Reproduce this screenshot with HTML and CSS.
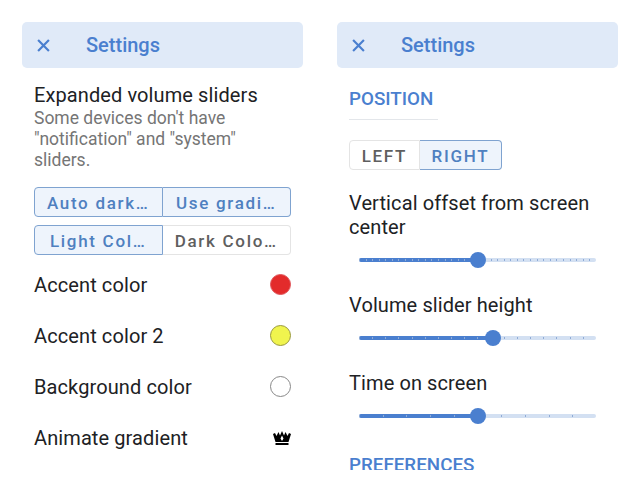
FILE: index.html
```html
<!DOCTYPE html>
<html lang="en">
<head>
    <meta charset="UTF-8">
    <title>Settings</title>
    <link rel="stylesheet" href="styles.css">
</head>
<body>
    <main class="screens">
        <section class="panel">
            <header class="bar">
                <svg class="close" viewBox="0 0 12 12"><path d="M1 1 11 11M11 1 1 11"/></svg>
                <h1>Settings</h1>
            </header>
            <div class="content">
                <h2 class="title">Expanded volume sliders</h2>
                <p class="sub">Some devices don't have "notification" and "system" sliders.</p>
                <div class="toggles wide first">
                    <button class="on">Auto dark…</button>
                    <button class="on">Use gradi…</button>
                </div>
                <div class="toggles wide">
                    <button class="on">Light Col…</button>
                    <button>Dark Colo…</button>
                </div>
                <div class="row first-row"><span>Accent color</span><i class="dot red"></i></div>
                <div class="row"><span>Accent color 2</span><i class="dot yellow"></i></div>
                <div class="row"><span>Background color</span><i class="dot white"></i></div>
                <div class="row">
                    <span>Animate gradient</span>
                    <svg class="crown" viewBox="0 0 18 14">
                        <path fill-rule="evenodd" d="M0 3 2 2 3.5 5 5.5 1 7 4.5 9 0 11 4.5 12.500 1 14.500 5 16 2 18 3 15.500 11H2.500ZM9 4.500 7.500 7.500 9 10 10.500 7.500Z"/>
                        <path d="M2.500 12H15.500V14H2.500Z"/>
                    </svg>
                </div>
            </div>
        </section>

        <section class="panel">
            <header class="bar">
                <svg class="close" viewBox="0 0 12 12"><path d="M1 1 11 11M11 1 1 11"/></svg>
                <h1>Settings</h1>
            </header>
            <div class="content">
                <h3 class="group">POSITION</h3>
                <div class="toggles small">
                    <button>LEFT</button>
                    <button class="on">RIGHT</button>
                </div>
                <h2 class="title">Vertical offset from screen center</h2>
                <div class="slider">
                    <div class="track ticks-fine"><div class="fill" style="width: 50%"></div></div>
                    <div class="thumb" style="left: 50%"></div>
                </div>
                <h2 class="title">Volume slider height</h2>
                <div class="slider">
                    <div class="track ticks-mid"><div class="fill" style="width: 56.5%"></div></div>
                    <div class="thumb" style="left: 56.5%"></div>
                </div>
                <h2 class="title">Time on screen</h2>
                <div class="slider">
                    <div class="track ticks-wide"><div class="fill" style="width: 50%"></div></div>
                    <div class="thumb" style="left: 50%"></div>
                </div>
                <h3 class="group next">PREFERENCES</h3>
            </div>
        </section>
    </main>
</body>
</html>
```

FILE: styles.css
```css
* {
    box-sizing: border-box;
}

body {
    margin: 0;
    background: #fff;
    color: #202124;
    font-family: Roboto, "Liberation Sans", sans-serif;
}

.screens {
    display: flex;
    gap: 34px;
    height: 470px;
    padding: 22px 22px 0;
    overflow: hidden;
}

.panel {
    width: 281px;
    flex: none;
}

.bar {
    display: flex;
    align-items: center;
    height: 46px;
    padding-left: 15px;
    background: #e0eaf8;
    border-radius: 5px;
}

.bar h1 {
    margin: 0 0 0 36px;
    color: #4a7fcf;
    font-size: 20px;
    font-weight: 500;
}

.close {
    width: 13px;
    height: 13px;
    fill: none;
    stroke: #4a7fcf;
    stroke-width: 2;
}

.content {
    padding: 15px 12px 0;
}

.title {
    margin: 0;
    font-size: 20px;
    font-weight: 400;
    line-height: 24px;
    letter-spacing: 0.1px;
}

.sub {
    margin: 1px 0 0;
    color: #757575;
    font-size: 17.5px;
    line-height: 21px;
}

.toggles {
    display: flex;
}

.toggles button {
    flex: auto;
    min-width: 0;
    padding: 1px 0 0;
    background: #fff;
    border: 1px solid #e4e4e4;
    color: #5f5f5f;
    font: 500 17px Roboto, sans-serif;
    letter-spacing: 1.7px;
}

.toggles button.on {
    background: #eef4fc;
    border-color: #7fa3d0;
    color: #4f80c0;
}

.toggles button:first-child {
    border-radius: 4px 0 0 4px;
}

.toggles button:last-child {
    border-left: none;
    border-radius: 0 4px 4px 0;
}

.wide {
    height: 30px;
    margin-top: 8px;
}

.wide button {
    width: 50%;
}

.wide.first {
    margin-top: 16px;
}

.small {
    width: 153px;
    height: 30px;
    margin: 20px 0 21px;
}

.row {
    display: flex;
    justify-content: space-between;
    align-items: center;
    height: 51px;
    font-size: 20px;
    letter-spacing: 0.1px;
}

.first-row {
    margin-top: 4px;
}

.dot {
    width: 21px;
    height: 21px;
    border-radius: 50%;
    border: 1px solid #888;
}

.dot.red {
    background: #e32b2b;
    border-color: #e0555a;
}

.dot.yellow {
    background: #f0f44e;
    border-color: #99993f;
}

.dot.white {
    background: #fff;
}

.crown {
    width: 18px;
    height: 14px;
}

.group {
    width: 89px;
    margin: 4px 0 0;
    padding-bottom: 8px;
    border-bottom: 1px solid #e3e6ea;
    color: #4a7fcf;
    font-size: 18.8px;
    font-weight: 500;
    line-height: 24px;
}

.group.next {
    width: auto;
    border: none;
    margin-top: 24px;
}

.slider {
    position: relative;
    display: flex;
    align-items: center;
    height: 26px;
    margin: 8px 10px 20px;
}

.track {
    position: relative;
    width: 100%;
    height: 4px;
    background-color: #d3e0f2;
    border-radius: 2px;
}

.track::after {
    content: "";
    position: absolute;
    inset: 1px 0;
}

.ticks-fine::after {
    background-image: repeating-linear-gradient(90deg, #8fabd6 0 1px, transparent 1px 6.58px);
}

.ticks-mid::after {
    background-image: repeating-linear-gradient(90deg, #8fabd6 0 1px, transparent 1px 13.16px);
}

.ticks-wide::after {
    background-image: repeating-linear-gradient(90deg, #8fabd6 0 1px, transparent 1px 23.7px);
}

.fill {
    height: 100%;
    background: #4a7fcf;
    border-radius: 2px;
}

.thumb {
    position: absolute;
    top: 5px;
    width: 16px;
    height: 16px;
    margin-left: -8px;
    background: #4a7fcf;
    border-radius: 50%;
}
```
